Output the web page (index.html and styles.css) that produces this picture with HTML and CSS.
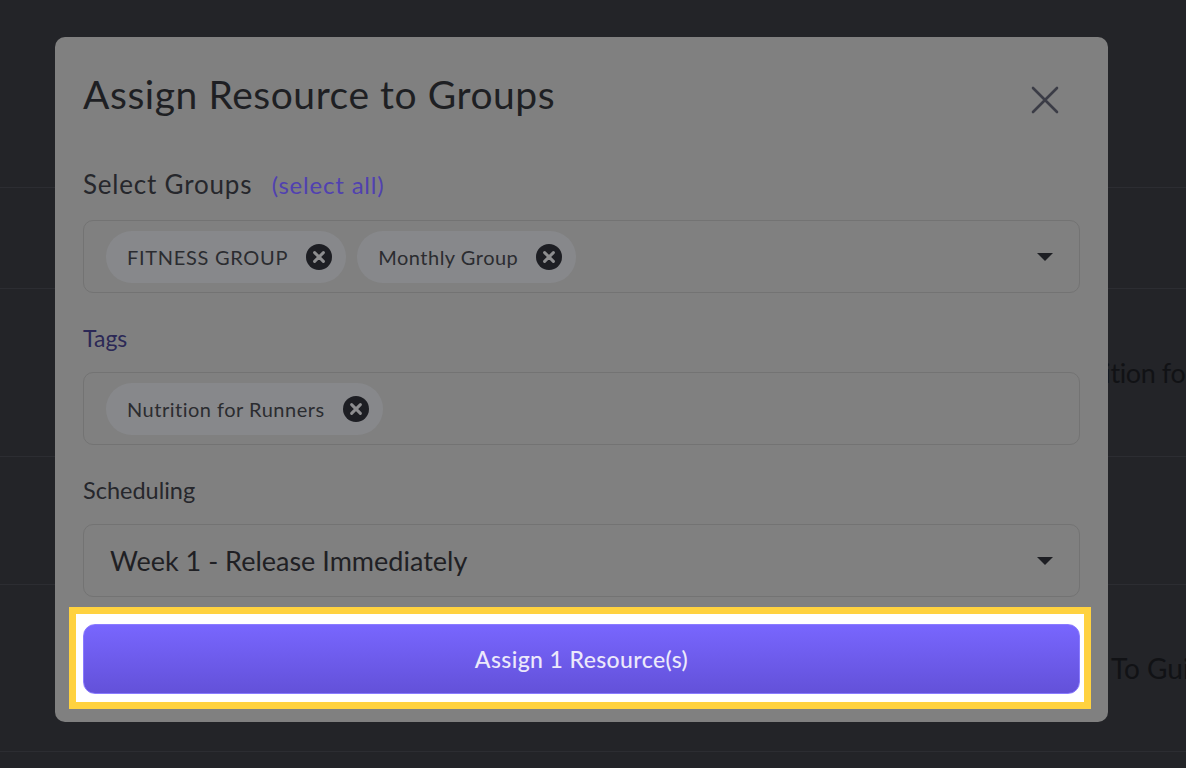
FILE: index.html
```html
<!doctype html>
<html lang="en">
<head>
    <meta charset="UTF-8">
    <meta name="viewport" content="width=device-width, initial-scale=1.0">
    <title>Assign Resource to Groups</title>
    <link rel="stylesheet" href="styles.css">
</head>
<body>
    <div class="page">
        <div class="row row-head"></div>
        <div class="row row-a"></div>
        <div class="row row-b"><span class="row-title">Nutrition for Runners</span></div>
        <div class="row row-c"></div>
        <div class="row row-d"><span class="row-title row-title-2">Intro To Guide</span></div>
    </div>

    <div class="modal">
        <div class="modal-head">
            <h1 class="modal-title">Assign Resource to Groups</h1>
            <span class="modal-close">
                <svg width="28" height="28" viewBox="0 0 28 28"><path d="M2 2 L26 26 M26 2 L2 26" stroke="#3b3c46" stroke-width="2.6" stroke-linecap="round" fill="none"/></svg>
            </span>
        </div>

        <div class="field-label field-label-groups">Select Groups <a class="select-all" href="#">(select all)</a></div>
        <div class="box">
            <div class="chips">
                <span class="chip chip-caps">FITNESS GROUP<i class="chip-x"></i></span>
                <span class="chip">Monthly Group<i class="chip-x"></i></span>
            </div>
            <span class="caret"></span>
        </div>

        <div class="field-label field-label-tags">Tags</div>
        <div class="box">
            <div class="chips">
                <span class="chip">Nutrition for Runners<i class="chip-x"></i></span>
            </div>
        </div>

        <div class="field-label field-label-sched">Scheduling</div>
        <div class="box">
            <span class="box-value">Week 1 - Release Immediately</span>
            <span class="caret"></span>
        </div>

        <div class="spot">
            <button class="assign-btn">Assign 1 Resource(s)</button>
        </div>
    </div>

    <script>
        // 给每个标签加上删除图标
        var aX = document.querySelectorAll('.chip-x');
        for(var i = 0; i < aX.length; i++){
            aX[i].innerHTML = '<svg width="26" height="26" viewBox="0 0 26 26"><circle cx="13" cy="13" r="13" fill="#1d1e23"/><path d="M8.6 8.6 L17.4 17.4 M17.4 8.6 L8.6 17.4" stroke="#8d8d8f" stroke-width="3" stroke-linecap="round"/></svg>';
        }
    </script>
</body>
</html>
```

FILE: styles.css
```css
*{
    padding: 0;
    margin: 0;
    box-sizing: border-box;
}
html, body{
    width: 1186px;
    height: 768px;
    overflow: hidden;
}
body{
    background: #232428;
    font-family: Lato, "Noto Sans", sans-serif;
    position: relative;
}

/* 背景里被遮住的页面 */
.page{
    width: 100%;
}
.row{
    border-bottom: 1px solid #2c2d32;
    display: flex;
    align-items: center;
}
.row-head{ height: 188px; }
.row-a{ height: 101px; }
.row-b{ height: 168px; }
.row-c{ height: 128px; }
.row-d{ height: 167px; }
.row-title{
    flex-shrink: 0;
    margin-left: 1051px;
    font-size: 27px;
    letter-spacing: -0.4px;
    color: #111215;
    white-space: nowrap;
}
.row-title-2{
    margin-left: 1046px;
    font-size: 28px;
    letter-spacing: 0;
}

/* 弹窗 */
.modal{
    position: absolute;
    left: 55px;
    top: 37px;
    width: 1053px;
    background: #808080;
    border-radius: 10px;
    padding: 28px 28px 13px;
}
.modal-head{
    height: 62px;
    display: flex;
    align-items: center;
    justify-content: space-between;
}
.modal-title{
    font-size: 39px;
    font-weight: 400;
    color: #1e1f23;
    letter-spacing: 0.55px;
    margin-top: -4px;
}
.modal-close{
    display: flex;
    margin-right: 21px;
    margin-top: 8px;
}

.field-label{
    height: 30px;
    line-height: 30px;
    color: #26272c;
}
.field-label-groups{
    margin-top: 42px;
    margin-bottom: 21px;
    font-size: 26px;
    letter-spacing: 0.8px;
}
.field-label-tags{
    margin-top: 30px;
    margin-bottom: 19px;
    color: #2b2856;
    font-size: 23px;
}
.field-label-sched{
    margin-top: 30px;
    margin-bottom: 19px;
    font-size: 23.5px;
}
.select-all{
    margin-left: 12px;
    font-size: 24px;
    letter-spacing: 0.8px;
    color: #5041b0;
    text-decoration: none;
}

.box{
    height: 73px;
    border: 1.5px solid #737373;
    border-radius: 10px;
    display: flex;
    align-items: center;
    justify-content: space-between;
    padding: 0 26px 0 22px;
}
.chips{
    display: flex;
    gap: 11px;
}
.chip{
    height: 52px;
    border-radius: 26px;
    background: #87888b;
    display: flex;
    align-items: center;
    padding: 0 14px 0 21px;
    font-size: 20px;
    letter-spacing: 0.5px;
    color: #2b2c30;
    gap: 18px;
}
.chip-caps{
    letter-spacing: 0.7px;
}
.chip-x{
    display: flex;
    width: 26px;
    height: 26px;
}
.caret{
    width: 0;
    height: 0;
    border-left: 8px solid transparent;
    border-right: 8px solid transparent;
    border-top: 8px solid #1d1e23;
}
.box-value{
    padding-left: 4px;
    font-size: 27px;
    color: #1f2024;
}

/* 高亮的按钮 */
.spot{
    margin: 10px -11px 0 -14px;
    border: 7px solid #ffd23f;
    background: #fff;
    padding: 10px 4px 8px 7px;
}
.assign-btn{
    display: block;
    width: 100%;
    height: 70px;
    border: 1px solid #8a7bff;
    border-radius: 12px;
    background: linear-gradient(#7866fe, #6351d9);
    color: #ece9fb;
    font-family: Lato, "Noto Sans", sans-serif;
    font-size: 23px;
    letter-spacing: 0.4px;
    font-weight: 500;
    cursor: pointer;
}
```
